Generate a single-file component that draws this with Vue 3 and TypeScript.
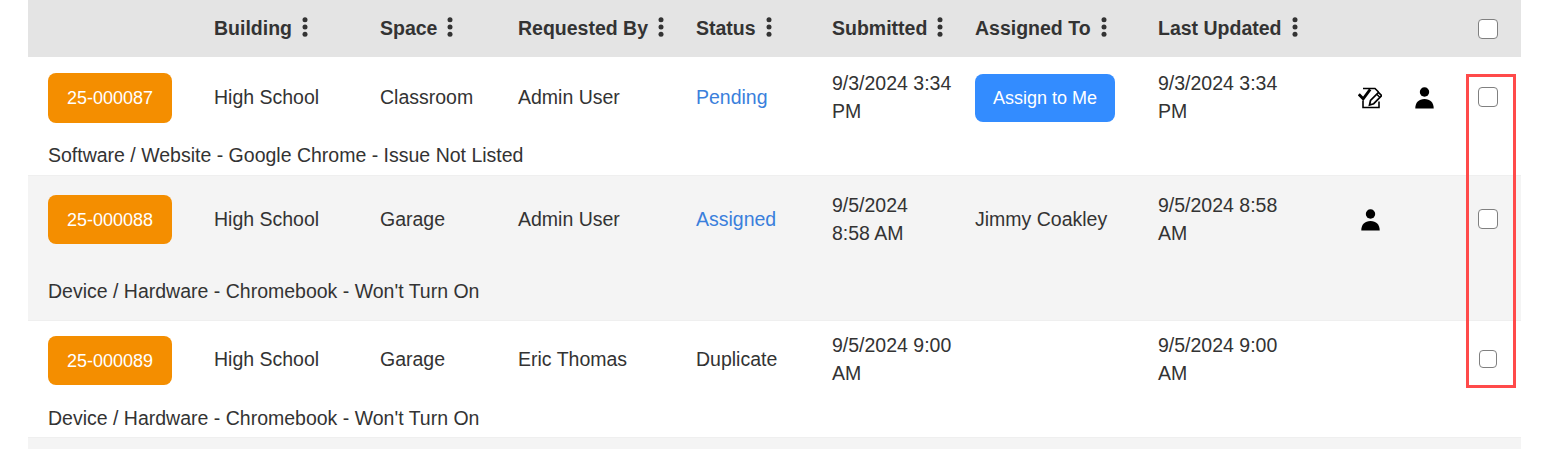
<script setup lang="ts">
interface Row {
  id: string
  space: string
  by: string
  status: string
  link: boolean
  submitted: string[]
  assigned: string
  assignBtn: boolean
  updated: string[]
  edit: boolean
  person: boolean
  desc: string
  cls: string
}
const headers = ['Building', 'Space', 'Requested By', 'Status', 'Submitted', 'Assigned To', 'Last Updated']
const rows: Row[] = [
  { id: '25-000087', space: 'Classroom', by: 'Admin User', status: 'Pending', link: true, submitted: ['9/3/2024 3:34', 'PM'], assigned: '', assignBtn: true, updated: ['9/3/2024 3:34', 'PM'], edit: true, person: true, desc: 'Software / Website - Google Chrome - Issue Not Listed', cls: 'r1' },
  { id: '25-000088', space: 'Garage', by: 'Admin User', status: 'Assigned', link: true, submitted: ['9/5/2024', '8:58 AM'], assigned: 'Jimmy Coakley', assignBtn: false, updated: ['9/5/2024 8:58', 'AM'], edit: false, person: true, desc: "Device / Hardware - Chromebook - Won't Turn On", cls: 'r2' },
  { id: '25-000089', space: 'Garage', by: 'Eric Thomas', status: 'Duplicate', link: false, submitted: ['9/5/2024 9:00', 'AM'], assigned: '', assignBtn: false, updated: ['9/5/2024 9:00', 'AM'], edit: false, person: false, desc: "Device / Hardware - Chromebook - Won't Turn On", cls: 'r3' },
]
</script>

<template>
  <div class="page">
    <div class="table">
      <div class="grid head">
        <div></div>
        <div v-for="h in headers" :key="h" class="th">
          <span>{{ h }}</span>
          <svg class="dots" width="6" height="20" viewBox="0 0 6 20"><circle cx="3" cy="2.800" r="2.500" /><circle cx="3" cy="10" r="2.500" /><circle cx="3" cy="17.200" r="2.500" /></svg>
        </div>
        <div></div>
        <div class="chk"><input type="checkbox" /></div>
      </div>
      <div v-for="r in rows" :key="r.id" class="row" :class="r.cls">
        <div class="grid main">
          <div class="ticket-cell"><span class="ticket">{{ r.id }}</span></div>
          <div>High School</div>
          <div>{{ r.space }}</div>
          <div>{{ r.by }}</div>
          <div :class="{ link: r.link }">{{ r.status }}</div>
          <div><span v-for="l in r.submitted" :key="l" class="line">{{ l }}</span></div>
          <div class="assign-cell"><button v-if="r.assignBtn" class="assign" type="button">Assign to Me</button><template v-else>{{ r.assigned }}</template></div>
          <div><span v-for="l in r.updated" :key="l" class="line">{{ l }}</span></div>
          <div class="icons">
            <span v-if="r.edit" class="slot">
              <svg class="ic-edit" width="24" height="22" viewBox="0 0 24 22" fill="none">
                <path d="M5 1.500h12l3.500 3.500M5 13.500v7h16v-6" stroke="#000" stroke-width="1.600" />
                <path d="M0.800 7.200l4.400 4.600 7-9.500" stroke="#000" stroke-width="2.800" />
                <path d="M11.500 18l1-4.500 8-8 3.200 3.200-8 8z" stroke="#000" stroke-width="1.700" fill="#fff" />
                <path d="M19 7.500l3 3" stroke="#000" stroke-width="1.400" />
              </svg>
            </span>
            <span v-if="r.person" class="slot">
              <svg class="ic-person" width="19" height="22" viewBox="0 0 19 22"><circle cx="9.500" cy="5" r="4.700" /><path d="M0.300 21.500c0-6 3.500-9.500 9.200-9.500s9.200 3.500 9.200 9.500z" /></svg>
            </span>
          </div>
          <div class="chk"><input type="checkbox" /></div>
        </div>
        <div class="desc">{{ r.desc }}</div>
      </div>
      <div class="tail"></div>
    </div>
    <div class="marker"></div>
  </div>
</template>

<style>
html, body { margin: 0; background: #fff; }
</style>

<style scoped>
.page {
  position: relative;
  width: 1565px;
  height: 449px;
  overflow: hidden;
  padding: 0 44px 0 28px;
  box-sizing: border-box;
  font-family: "Liberation Sans", Arial, sans-serif;
  font-size: 19.5px;
  line-height: 28px;
  color: #333;
}
.grid {
  display: grid;
  grid-template-columns: 186px 166px 138px 178px 136px 143px 183px 186px 134px 43px;
  align-items: center;
}
.head {
  height: 57px;
  background: #e4e4e4;
  font-weight: 700;
}
.th { display: flex; align-items: center; gap: 10px; padding-bottom: 1px; }
.dots { fill: #333; flex: none; margin-top: -2px; }
.line { display: block; }
.row { border-bottom: 1px solid #efefef; box-sizing: border-box; }
.row > .desc { padding-left: 20px; }
.r1 { padding: 12px 0 6px; height: 119px; }
.r1 .desc { margin-top: 16px; }
.r2 { padding: 15px 0 15px; height: 145px; background: #f4f4f4; }
.r2 .desc { margin-top: 30px; }
.r3 { padding: 10px 0 5px; height: 117px; }
.r3 .desc { margin-top: 17px; }
.ticket-cell { padding: 2px 0 0 20px; }
.r2 .ticket-cell { padding-top: 1px; }
.r3 .ticket-cell { padding-top: 3px; }
.r3 .chk { padding-left: 1px; }
.ticket {
  display: flex;
  align-items: center;
  justify-content: center;
  width: 124px;
  height: 50px;
  border-radius: 8px;
  background: #f48e00;
  color: #fff;
  font-size: 18px;
}
.r2 .ticket, .r3 .ticket { height: 49px; }
.link { color: #3a7fdc; }
.assign-cell { padding-top: 2px; }
.r2 .assign-cell { padding-top: 0; }
.assign {
  display: block;
  width: 140px;
  height: 48px;
  border: 0;
  border-radius: 8px;
  padding: 0;
  background: #338cff;
  color: #fff;
  font: 18px "Liberation Sans", Arial, sans-serif;
}
.icons { display: flex; align-items: center; padding-top: 2px; }
.slot { display: flex; justify-content: center; width: 54px; }
.ic-edit { margin-right: 2px; }
.ic-person { margin-right: 1px; }
.chk { display: flex; }
.chk input {
  appearance: none;
  -webkit-appearance: none;
  box-sizing: border-box;
  width: 20px;
  height: 20px;
  margin: 0;
  background: #fff;
  border: 1.500px solid #808080;
  border-radius: 4px;
}
.r3 .chk input { width: 18px; height: 18px; }
.tail { height: 11px; background: #f4f4f4; }
.marker {
  position: absolute;
  left: 1466px;
  top: 74px;
  width: 50px;
  height: 314px;
  box-sizing: border-box;
  border: 3px solid #ff4a4a;
  pointer-events: none;
}
</style>
